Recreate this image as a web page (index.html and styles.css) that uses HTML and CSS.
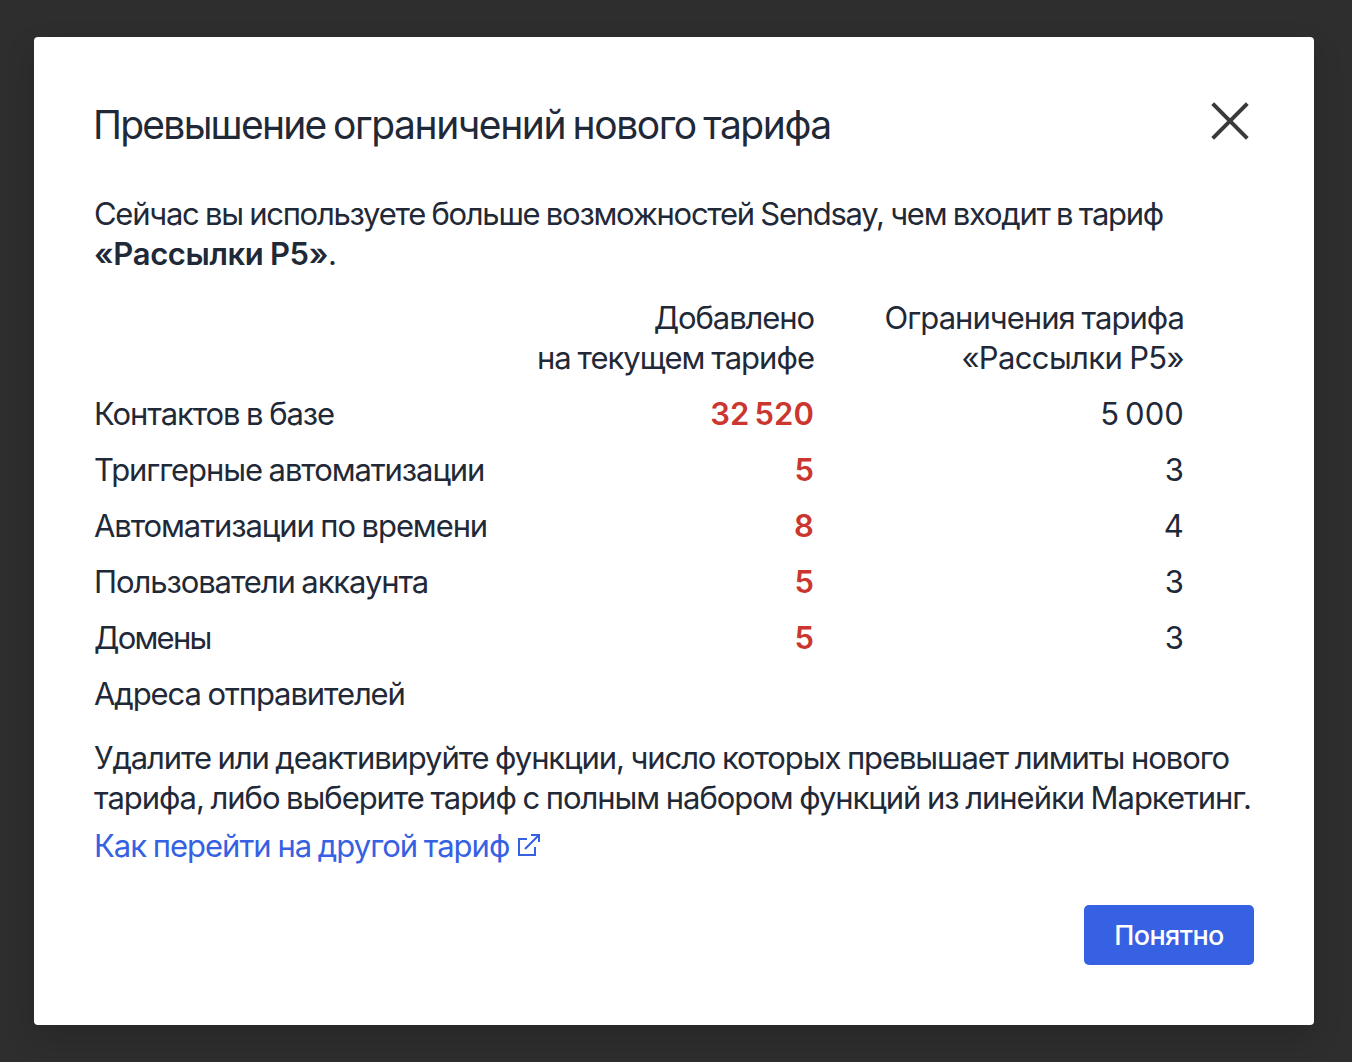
FILE: index.html
```html
<!DOCTYPE html>
<html lang="ru">
<head>
<meta charset="utf-8">
<title>Превышение ограничений нового тарифа</title>
<link rel="stylesheet" href="styles.css">
</head>
<body>
<main class="modal">
  <header class="header">
    <h1 class="title"><span class="t-exceed">Превышение</span> ограничений нового тарифа</h1>
    <button class="close" aria-label="Закрыть"><svg width="38" height="38" viewBox="0 0 38 38"><path d="M1.7 1.7l34.6 34.6M36.3 1.7l-34.6 34.6"/></svg></button>
  </header>
  <p class="intro"><span class="t-intro">Сейчас вы используете больше возможностей Sendsay, чем входит в тариф</span><br><b class="t-plan">«Рассылки P5»</b>.</p>
  <table class="limits">
    <thead><tr><th></th><th><span class="t-added">Добавлено</span><br><span class="t-current">на текущем тарифе</span></th><th><span class="t-limits">Ограничения тарифа</span><br><span class="t-name">«Рассылки P5»</span></th></tr></thead>
    <tbody>
      <tr><td><span class="t-contacts">Контактов в базе</span></td><td class="over">32 520</td><td>5 000</td></tr>
      <tr><td>Триггерные автоматизации</td><td class="over">5</td><td>3</td></tr>
      <tr><td>Автоматизации по времени</td><td class="over">8</td><td>4</td></tr>
      <tr><td>Пользователи аккаунта</td><td class="over">5</td><td>3</td></tr>
      <tr><td><span class="t-domains">Домены</span></td><td class="over">5</td><td>3</td></tr>
      <tr><td>Адреса отправителей</td><td></td><td></td></tr>
    </tbody>
  </table>
  <p class="advice">Удалите или деактивируйте функции, число которых превышает лимиты нового<br><span class="t-choose">тарифа, либо выберите тариф с полным набором функций из линейки Маркетинг.</span></p>
  <a class="link" href="#"><span class="t-link">Как перейти на другой тариф</span><svg width="24" height="24" viewBox="0 0 24 24"><path d="M10 5H2v16h16v-8M14 1h8v7M22 1L8 15"/></svg></a>
  <footer class="footer"><button class="ok">Понятно</button></footer>
</main>
</body>
</html>
```
FILE: styles.css
```css
* { box-sizing: border-box; }
body {
  margin: 0;
  height: 1062px;
  padding: 37px 38px 37px 34px;
  background: #2e2e2e;
  color: #1f2937;
  font: 31px/40px Inter, "Liberation Sans", sans-serif;
  letter-spacing: -1.09px;
  word-spacing: -1px;
  white-space: nowrap;
}
.modal {
  height: 988px;
  padding: 60px;
  border-radius: 4px;
  background: #fff;
  box-shadow: 0 12px 30px rgba(0, 0, 0, .16);
}
.header { display: flex; justify-content: space-between; height: 97px; }
.title { margin: 4px 0 0 -1px; font-size: 39px; line-height: 48px; font-weight: 400; letter-spacing: -1.43px; word-spacing: -2px; }
.t-exceed { letter-spacing: -1.75px; }
.close { width: 38px; height: 38px; margin: 5px 5px 0 0; padding: 0; border: 0; background: none; }
.close svg { display: block; fill: none; stroke: #3a3a3a; stroke-width: 4; }
p { margin: 0; }
b { font-weight: 600; }
.limits { margin-top: 24px; width: 1090px; border-collapse: collapse; table-layout: fixed; }
th, td { padding: 0 0 16px; text-align: right; font-weight: 400; }
th:first-child, td:first-child { width: 420px; text-align: left; }
th:nth-child(2) { width: 300px; }
td:not(:first-child) { letter-spacing: .1px; word-spacing: -3px; }
.limits .over { color: #cb372f; font-weight: 600; }
.t-intro { letter-spacing: -1.27px; }
.t-plan { letter-spacing: -.35px; }
.t-added { letter-spacing: -1.1px; }
.t-current, .t-limits { letter-spacing: -.97px; }
.t-name { letter-spacing: -.64px; }
.t-contacts { letter-spacing: -1.08px; }
.t-domains { letter-spacing: -1.75px; }
.t-choose { letter-spacing: -1.05px; }
.t-link { letter-spacing: -1px; }
.advice { margin-top: 8px; }
.link { display: flex; align-items: flex-start; gap: 8px; margin-top: 8px; color: #3661e2; text-decoration: none; }
.link svg { margin-top: 8px; fill: none; stroke: currentColor; stroke-width: 2; }
.footer { display: flex; justify-content: flex-end; margin-top: 39px; }
.ok { width: 170px; height: 60px; padding: 2px 0 0; border: 0; border-radius: 5px; background: #3661e2; color: #fff; font: 500 27px/40px Inter, sans-serif; letter-spacing: -.6px; }
```
